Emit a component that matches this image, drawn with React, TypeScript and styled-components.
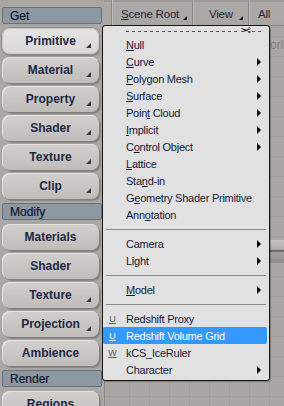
import React, { ReactElement } from 'react';
import styled, { createGlobalStyle, css } from 'styled-components';

interface MenuEntry {
  kind: 'item' | 'sep';
  label?: string;
  mnemonic?: number;
  sub?: boolean;
  icon?: string;
  active?: boolean;
}

const sideGroups = [
  {
    title: 'Get',
    buttons: [
      { label: 'Primitive', more: true, active: true },
      { label: 'Material', more: true },
      { label: 'Property', more: true },
      { label: 'Shader', more: true },
      { label: 'Texture', more: true },
      { label: 'Clip', more: true },
    ],
  },
  {
    title: 'Modify',
    buttons: [
      { label: 'Materials' },
      { label: 'Shader' },
      { label: 'Texture', more: true },
      { label: 'Projection', more: true },
      { label: 'Ambience' },
    ],
  },
  {
    title: 'Render',
    buttons: [{ label: 'Regions' }],
  },
];

const menuEntries: MenuEntry[] = [
  { kind: 'item', label: 'Null', mnemonic: 0 },
  { kind: 'item', label: 'Curve', mnemonic: 0, sub: true },
  { kind: 'item', label: 'Polygon Mesh', mnemonic: 0, sub: true },
  { kind: 'item', label: 'Surface', mnemonic: 0, sub: true },
  { kind: 'item', label: 'Point Cloud', mnemonic: 4, sub: true },
  { kind: 'item', label: 'Implicit', mnemonic: 0, sub: true },
  { kind: 'item', label: 'Control Object', mnemonic: 1, sub: true },
  { kind: 'item', label: 'Lattice', mnemonic: 0 },
  { kind: 'item', label: 'Stand-in', mnemonic: 3 },
  { kind: 'item', label: 'Geometry Shader Primitive', mnemonic: 1 },
  { kind: 'item', label: 'Annotation', mnemonic: 3 },
  { kind: 'sep' },
  { kind: 'item', label: 'Camera', sub: true },
  { kind: 'item', label: 'Light', sub: true },
  { kind: 'sep' },
  { kind: 'item', label: 'Model', mnemonic: 0, sub: true },
  { kind: 'sep' },
  { kind: 'item', label: 'Redshift Proxy', icon: 'U' },
  { kind: 'item', label: 'Redshift Volume Grid', icon: 'U', active: true },
  { kind: 'item', label: 'kCS_IceRuler', icon: 'W' },
  { kind: 'item', label: 'Character', sub: true },
];

const withMnemonic = (label: string, index?: number) => {
  if (index === undefined) return label;
  return (
    <>
      {label.slice(0, index)}
      <u>{label.charAt(index)}</u>
      {label.slice(index + 1)}
    </>
  );
};

const App = (): ReactElement => {
  return (
    <Frame>
      <GlobalStyle />
      <SidePanel>
        {sideGroups.map(group => (
          <React.Fragment key={group.title}>
            <GroupHeader>{group.title}</GroupHeader>
            {group.buttons.map(b => (
              <PanelButton key={group.title + b.label} active={!!b.active}>
                {b.label}
                {b.more && <CornerMark />}
              </PanelButton>
            ))}
          </React.Fragment>
        ))}
      </SidePanel>

      <Main>
        <Toolbar>
          <ToolbarItem width={81}>
            <u>S</u>cene Root
            <ToolbarMark />
          </ToolbarItem>
          <ToolbarItem width={56} center>
            View
            <ToolbarMark />
          </ToolbarItem>
          <ToolbarItem width={40}>All</ToolbarItem>
        </Toolbar>
        <Viewport>
          <ViewLabel>World</ViewLabel>
          <ViewSlider />
        </Viewport>
      </Main>

      <Menu>
        <TearOff>
          <Scissors>✂</Scissors>
        </TearOff>
        {menuEntries.map((entry, i) =>
          entry.kind === 'sep' ? (
            <Separator key={i} />
          ) : (
            <MenuRow key={i} active={!!entry.active}>
              <IconSlot active={!!entry.active}>
                {entry.icon && <u>{entry.icon}</u>}
              </IconSlot>
              <MenuLabel>{withMnemonic(entry.label!, entry.mnemonic)}</MenuLabel>
              {entry.sub && <SubArrow />}
            </MenuRow>
          )
        )}
      </Menu>
    </Frame>
  );
};

const GlobalStyle = createGlobalStyle`
  html, body {
    margin: 0;
    padding: 0;
  }
  body {
    width: 284px;
    height: 406px;
    overflow: hidden;
    background: #aaa7a4;
    font-family: "Liberation Sans", Arial, sans-serif;
  }
`;

const Frame = styled.div`
  position: relative;
  display: flex;
  width: 284px;
  height: 406px;
  overflow: hidden;
`;

const SidePanel = styled.div`
  width: 104px;
  flex-shrink: 0;
  box-sizing: border-box;
  display: flex;
  flex-direction: column;
  gap: 3px;
  padding: 6px 2px 0 2px;
  background: #aaa7a4;
  overflow: hidden;
`;

const GroupHeader = styled.div`
  height: 17px;
  flex-shrink: 0;
  box-sizing: border-box;
  display: flex;
  align-items: center;
  padding-left: 7px;
  margin: 1px 0;
  background: #8c99a3;
  border: 1px solid #66727b;
  border-radius: 2px;
  font-size: 12px;
  color: #0c1629;
  -webkit-text-stroke: 0.2px #0c1629;
`;

const PanelButton = styled.div<{ active: boolean }>`
  position: relative;
  height: 26px;
  width: 97px;
  flex-shrink: 0;
  box-sizing: border-box;
  display: flex;
  align-items: center;
  justify-content: center;
  border-radius: 8px;
  background: linear-gradient(#d2cfcc, #bfbcb9);
  box-shadow: inset 1px 1px 0 #e6e4e2, 1px 1px 0 #82807d, 2px 2px 1px rgba(0, 0, 0, 0.2);
  font-size: 12px;
  font-weight: bold;
  color: #1d2847;
  ${props =>
    props.active &&
    css`
      background: linear-gradient(#e6e4e2, #dbd9d7);
      box-shadow: inset 0 0 0 1px #c9c7c5, 0 0 0 1px #8f8c89, 1px 2px 2px rgba(0, 0, 0, 0.25);
    `}
`;

const CornerMark = styled.span`
  position: absolute;
  right: 8px;
  bottom: 6px;
  width: 0;
  height: 0;
  border-left: 5px solid transparent;
  border-bottom: 5px solid #3a3a3a;
`;

const Main = styled.div`
  flex: 1;
  display: flex;
  flex-direction: column;
  min-width: 0;
`;

const Toolbar = styled.div`
  height: 26px;
  flex-shrink: 0;
  box-sizing: border-box;
  display: flex;
  padding-left: 7px;
  background: linear-gradient(#9d9a97 0, #9d9a97 2px, #acaaa6 2px, #a9a6a3);
  border-bottom: 1px solid #8c8986;
`;

const ToolbarItem = styled.div<{ width: number; center?: boolean }>`
  position: relative;
  width: ${p => p.width}px;
  flex-shrink: 0;
  box-sizing: border-box;
  display: flex;
  align-items: center;
  padding-left: ${p => (p.center ? 16 : 9)}px;
  padding-top: 3px;
  border-left: 1px solid #8a8784;
  box-shadow: inset 1px 0 0 #bebcb9;
  font-size: 11.5px;
  letter-spacing: -0.2px;
  color: #1e2540;
`;

const ToolbarMark = styled.span`
  position: absolute;
  right: 5px;
  bottom: 5px;
  width: 0;
  height: 0;
  border-left: 4px solid transparent;
  border-bottom: 4px solid #1a1a1a;
`;

const Viewport = styled.div`
  position: relative;
  flex: 1;
  border-left: 1px solid #8d8a87;
  background-color: #a9a6a3;
  background-image: linear-gradient(90deg, #a19e9b 1px, transparent 1px),
    linear-gradient(#a19e9b 1px, transparent 1px);
  background-size: 20px 20px;
  background-position: 4px 10px;
`;

const ViewLabel = styled.span`
  position: absolute;
  left: 154px;
  top: 12px;
  font-size: 12px;
  color: #827f7c;
`;

const ViewSlider = styled.div`
  position: absolute;
  left: 140px;
  top: 214px;
  width: 60px;
  height: 23px;
  background: linear-gradient(#c4c2bf 0, #b3b0ad 40%, #6f6d6b 45%, #6f6d6b 50%, #a3a09d 55%, #8f8c8a 100%);
`;

const Menu = styled.div`
  position: absolute;
  left: 102px;
  top: 25px;
  width: 168px;
  box-sizing: border-box;
  padding: 0 2px 2px 0;
  background: #e1e1e1;
  border: 1px solid #161616;
  border-radius: 3px;
  box-shadow: 1px 1px 1px rgba(0, 0, 0, 0.25);
`;

const TearOff = styled.div`
  height: 10px;
  margin: 0 4px 0 23px;
  display: flex;
  align-items: center;
  justify-content: flex-end;
  background-image: repeating-linear-gradient(90deg, #555 0 3px, transparent 3px 6px);
  background-size: 100% 1px;
  background-repeat: no-repeat;
  background-position: 0 5px;
`;

const Scissors = styled.span`
  margin-right: 12px;
  font-family: "DejaVu Sans", sans-serif;
  font-size: 13px;
  line-height: 10px;
  color: #111;
  background: #e1e1e1;
  transform: scaleX(-1);
`;

const MenuRow = styled.div<{ active: boolean }>`
  height: 17px;
  display: flex;
  align-items: center;
  border-radius: 2px;
  color: #161a3a;
  ${props =>
    props.active &&
    css`
      background: #3399ff;
      color: #ffffff;
    `}
`;

const IconSlot = styled.span<{ active: boolean }>`
  width: 23px;
  flex-shrink: 0;
  text-align: center;
  padding-right: 4px;
  box-sizing: border-box;
  font-size: 9px;
  color: ${p => (p.active ? '#ffffff' : '#5a5a5a')};
`;

const MenuLabel = styled.span`
  flex: 1;
  font-size: 11px;
  letter-spacing: -0.25px;
  white-space: nowrap;
`;

const SubArrow = styled.span`
  width: 0;
  height: 0;
  margin-right: 6px;
  border-left: 4px solid #000;
  border-top: 4px solid transparent;
  border-bottom: 4px solid transparent;
`;

const Separator = styled.div`
  height: 1px;
  margin: 6px 1px 5px 3px;
  background: #8a8a8a;
`;

export default App;
